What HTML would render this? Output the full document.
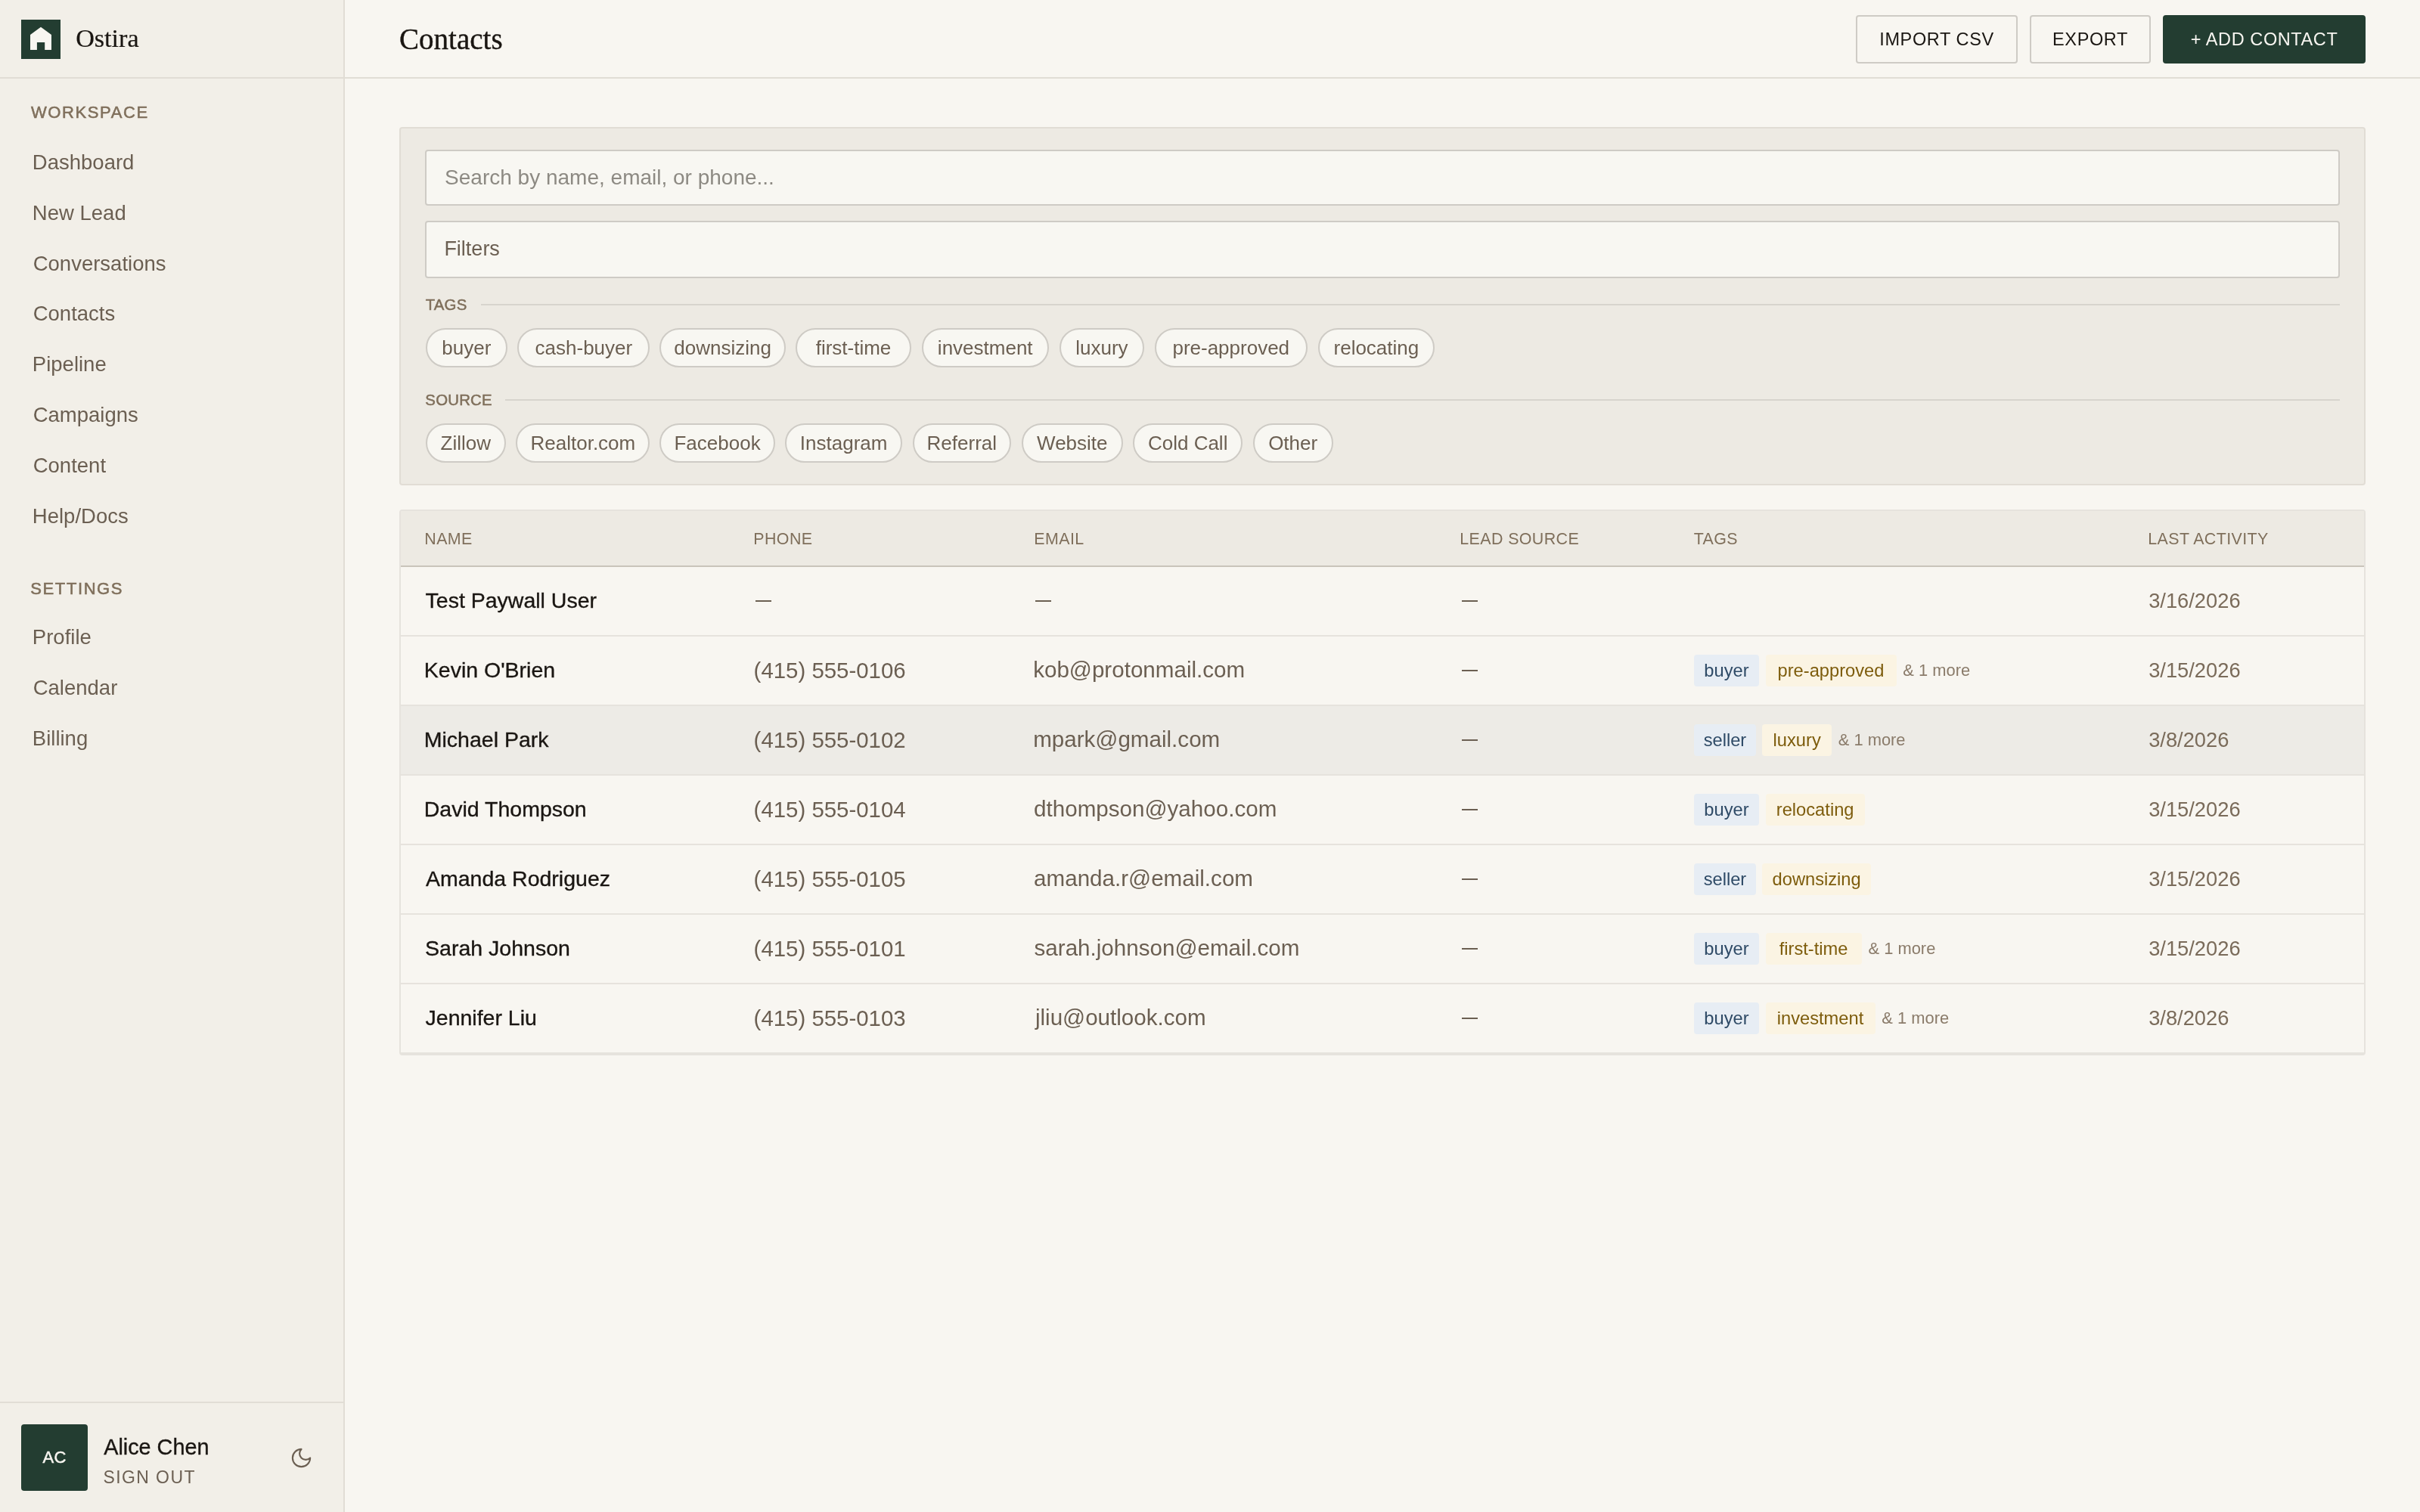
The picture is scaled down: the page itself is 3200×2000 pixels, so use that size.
<!DOCTYPE html>
<html><head><meta charset="utf-8"><title>Contacts</title>
<style>
html,body{margin:0;padding:0;background:#f8f6f1}
@media (max-width:2000px){#root{zoom:0.5}}
body{width:3200px;height:2000px;position:relative;overflow:hidden;background:#f8f6f1;font-family:'Liberation Sans', sans-serif}
.t{position:absolute;white-space:nowrap}
#root{position:absolute;left:0;top:0;width:3200px;height:2000px;will-change:transform}
.ct{position:absolute;text-align:center;white-space:nowrap;font-family:'Liberation Sans', sans-serif}
.chip{position:absolute;box-sizing:border-box;height:52px;line-height:48px;border:2px solid #cecbc5;border-radius:26px;background:#f8f7f2;
  text-align:center;font-size:26px;color:#6b5f52;white-space:nowrap}
.btn{position:absolute;top:20px;height:64px;box-sizing:border-box;border:2px solid #cecbc5;border-radius:4px;background:#f8f6f1;
  line-height:60px;text-align:center;font-size:23.5px;letter-spacing:0.6px;color:#1a1612;white-space:nowrap}
</style></head>
<body><div id="root">
<div style="position:absolute;left:0;top:0;width:454px;height:2000px;background:#f2efe8;border-right:2px solid #e1ddd5"></div>
<div style="position:absolute;left:28px;top:26px;width:52px;height:52px;background:#233d31"></div>
<svg style="position:absolute;left:0;top:0" width="100" height="100" viewBox="0 0 100 100"><path d="M40 46 L54 35.7 L68 46 V66 H59.2 V55.9 H48.9 V66 H40 Z" fill="#f8f6f1"/></svg>
<div style="position:absolute;left:28px;top:1884px;width:88px;height:88px;background:#233d31;border-radius:4px"></div>
<svg style="position:absolute;left:382.5px;top:1912.5px" width="31" height="31" viewBox="0 0 24 24" fill="none" stroke="#6b5f52" stroke-width="1.65" stroke-linecap="round" stroke-linejoin="round"><path d="M12 3a6 6 0 0 0 9 9 9 9 0 1 1-9-9Z"/></svg>
<div class="btn" style="left:2454px;width:214px;">IMPORT CSV</div>
<div class="btn" style="left:2684px;width:160px;">EXPORT</div>
<div class="btn" style="left:2860px;width:268px;background:#233d31;border-color:#233d31;color:#f8f6f1">+ ADD CONTACT</div>
<div style="position:absolute;left:528px;top:168px;width:2596px;height:470px;background:#edeae3;border:2px solid #e1ddd5;border-radius:4px"></div>
<div style="position:absolute;left:562px;top:198px;width:2528px;height:70px;background:#f8f7f2;border:2px solid #cecbc5;border-radius:4px"></div>
<div style="position:absolute;left:562px;top:292px;width:2528px;height:72px;background:#f8f7f2;border:2px solid #cecbc5;border-radius:4px"></div>
<div style="position:absolute;left:528px;top:674px;width:2596px;height:718px;background:#f8f6f1;border:2px solid #e6e3dd;border-radius:4px"></div>
<div style="position:absolute;left:998.5px;top:794px;width:21px;height:2px;background:#6b5f52"></div>
<div style="position:absolute;left:1369px;top:794px;width:21px;height:2px;background:#6b5f52"></div>
<div style="position:absolute;left:1933px;top:794px;width:21px;height:2px;background:#6b5f52"></div>
<div style="position:absolute;left:530px;top:840px;width:2596px;height:2px;background:#e6e3dd"></div>
<div style="position:absolute;left:1933px;top:886px;width:21px;height:2px;background:#6b5f52"></div>
<div style="position:absolute;left:530px;top:932px;width:2596px;height:2px;background:#e6e3dd"></div>
<div style="position:absolute;left:530px;top:934px;width:2596px;height:90px;background:#edebe6"></div>
<div style="position:absolute;left:1933px;top:978px;width:21px;height:2px;background:#6b5f52"></div>
<div style="position:absolute;left:530px;top:1024px;width:2596px;height:2px;background:#e6e3dd"></div>
<div style="position:absolute;left:1933px;top:1070px;width:21px;height:2px;background:#6b5f52"></div>
<div style="position:absolute;left:530px;top:1116px;width:2596px;height:2px;background:#e6e3dd"></div>
<div style="position:absolute;left:1933px;top:1162px;width:21px;height:2px;background:#6b5f52"></div>
<div style="position:absolute;left:530px;top:1208px;width:2596px;height:2px;background:#e6e3dd"></div>
<div style="position:absolute;left:1933px;top:1254px;width:21px;height:2px;background:#6b5f52"></div>
<div style="position:absolute;left:530px;top:1300px;width:2596px;height:2px;background:#e6e3dd"></div>
<div style="position:absolute;left:1933px;top:1346px;width:21px;height:2px;background:#6b5f52"></div>
<div style="position:absolute;left:530px;top:1392px;width:2596px;height:2px;background:#e6e3dd"></div>
<div style="position:absolute;left:0px;top:102px;width:454px;height:2px;background:#e1ddd5"></div>
<div style="position:absolute;left:0px;top:1854px;width:454px;height:2px;background:#e1ddd5"></div>
<div style="position:absolute;left:456px;top:102px;width:2744px;height:2px;background:#e1ddd5"></div>
<div style="position:absolute;left:636px;top:402px;width:2458px;height:2px;background:#d7d4cd"></div>
<div style="position:absolute;left:668px;top:528px;width:2426px;height:2px;background:#d7d4cd"></div>
<div style="position:absolute;left:530px;top:676px;width:2596px;height:72px;background:#edeae3"></div>
<div style="position:absolute;left:530px;top:748px;width:2596px;height:2px;background:#c9c4ba"></div>
<div class="chip" style="left:562.6px;top:434px;width:108.4px;">buyer</div>
<div class="chip" style="left:684.3px;top:434px;width:175.2px;">cash-buyer</div>
<div class="chip" style="left:872.3px;top:434px;width:166.6px;">downsizing</div>
<div class="chip" style="left:1052.0px;top:434px;width:153.0px;">first-time</div>
<div class="chip" style="left:1218.7px;top:434px;width:168.1px;">investment</div>
<div class="chip" style="left:1401.0px;top:434px;width:111.8px;">luxury</div>
<div class="chip" style="left:1526.5px;top:434px;width:202.5px;">pre-approved</div>
<div class="chip" style="left:1742.7px;top:434px;width:154.4px;">relocating</div>
<div class="chip" style="left:562.6px;top:560px;width:106.4px;">Zillow</div>
<div class="chip" style="left:682.3px;top:560px;width:177.2px;">Realtor.com</div>
<div class="chip" style="left:872.3px;top:560px;width:152.5px;">Facebook</div>
<div class="chip" style="left:1038.4px;top:560px;width:154.5px;">Instagram</div>
<div class="chip" style="left:1207.0px;top:560px;width:129.7px;">Referral</div>
<div class="chip" style="left:1350.8px;top:560px;width:134.0px;">Website</div>
<div class="chip" style="left:1498.4px;top:560px;width:144.6px;">Cold Call</div>
<div class="chip" style="left:1656.6px;top:560px;width:106.1px;">Other</div>
<div class="ct" style="left:2240.2px;top:866px;width:85.6px;height:42px;line-height:42px;font-size:23.7px;color:#2e4a66;font-weight:400;letter-spacing:0px;background:#e7edf4;border-radius:4px;">buyer</div>
<div class="ct" style="left:2334.5px;top:866px;width:173px;height:42px;line-height:42px;font-size:23.7px;color:#7d5c0c;font-weight:400;letter-spacing:0px;background:#fbf4e3;border-radius:4px;">pre-approved</div>
<div class="ct" style="left:2240.2px;top:958px;width:81.5px;height:42px;line-height:42px;font-size:23.7px;color:#2e4a66;font-weight:400;letter-spacing:0px;background:#e7edf4;border-radius:4px;">seller</div>
<div class="ct" style="left:2330.3999999999996px;top:958px;width:91.5px;height:42px;line-height:42px;font-size:23.7px;color:#7d5c0c;font-weight:400;letter-spacing:0px;background:#fbf4e3;border-radius:4px;">luxury</div>
<div class="ct" style="left:2240.2px;top:1050px;width:85.6px;height:42px;line-height:42px;font-size:23.7px;color:#2e4a66;font-weight:400;letter-spacing:0px;background:#e7edf4;border-radius:4px;">buyer</div>
<div class="ct" style="left:2334.5px;top:1050px;width:131.3px;height:42px;line-height:42px;font-size:23.7px;color:#7d5c0c;font-weight:400;letter-spacing:0px;background:#fbf4e3;border-radius:4px;">relocating</div>
<div class="ct" style="left:2240.2px;top:1142px;width:81.5px;height:42px;line-height:42px;font-size:23.7px;color:#2e4a66;font-weight:400;letter-spacing:0px;background:#e7edf4;border-radius:4px;">seller</div>
<div class="ct" style="left:2330.3999999999996px;top:1142px;width:143.5px;height:42px;line-height:42px;font-size:23.7px;color:#7d5c0c;font-weight:400;letter-spacing:0px;background:#fbf4e3;border-radius:4px;">downsizing</div>
<div class="ct" style="left:2240.2px;top:1234px;width:85.6px;height:42px;line-height:42px;font-size:23.7px;color:#2e4a66;font-weight:400;letter-spacing:0px;background:#e7edf4;border-radius:4px;">buyer</div>
<div class="ct" style="left:2334.5px;top:1234px;width:127.2px;height:42px;line-height:42px;font-size:23.7px;color:#7d5c0c;font-weight:400;letter-spacing:0px;background:#fbf4e3;border-radius:4px;">first-time</div>
<div class="ct" style="left:2240.2px;top:1326px;width:85.6px;height:42px;line-height:42px;font-size:23.7px;color:#2e4a66;font-weight:400;letter-spacing:0px;background:#e7edf4;border-radius:4px;">buyer</div>
<div class="ct" style="left:2334.5px;top:1326px;width:145px;height:42px;line-height:42px;font-size:23.7px;color:#7d5c0c;font-weight:400;letter-spacing:0px;background:#fbf4e3;border-radius:4px;">investment</div>
<div class="ct" style="left:28px;top:1884px;width:88px;height:88px;line-height:88px;font-size:22px;color:#f8f6f1;font-weight:400;letter-spacing:0.3px;-webkit-text-stroke:0.5px #f8f6f1;">AC</div>
<div class="t" style="left:100.13px;top:26.96px;font-family:'Liberation Serif', serif;font-size:34.2px;line-height:48px;color:#1a1612;font-weight:400;letter-spacing:0px;-webkit-text-stroke:0.2px #1a1612;">Ostira</div>
<div class="t" style="left:41.00px;top:133.08px;font-family:'Liberation Sans', sans-serif;font-size:22px;line-height:31px;color:#7f6f5b;font-weight:400;letter-spacing:1.6px;-webkit-text-stroke:0.55px #7f6f5b;">WORKSPACE</div>
<div class="t" style="left:42.85px;top:195.77px;font-family:'Liberation Sans', sans-serif;font-size:27.5px;line-height:38px;color:#6b5f52;font-weight:400;letter-spacing:0px;">Dashboard</div>
<div class="t" style="left:42.85px;top:262.67px;font-family:'Liberation Sans', sans-serif;font-size:27.5px;line-height:38px;color:#6b5f52;font-weight:400;letter-spacing:0px;">New Lead</div>
<div class="t" style="left:43.71px;top:329.57px;font-family:'Liberation Sans', sans-serif;font-size:27.5px;line-height:38px;color:#6b5f52;font-weight:400;letter-spacing:0px;">Conversations</div>
<div class="t" style="left:43.71px;top:396.47px;font-family:'Liberation Sans', sans-serif;font-size:27.5px;line-height:38px;color:#6b5f52;font-weight:400;letter-spacing:0px;">Contacts</div>
<div class="t" style="left:42.85px;top:463.37px;font-family:'Liberation Sans', sans-serif;font-size:27.5px;line-height:38px;color:#6b5f52;font-weight:400;letter-spacing:0px;">Pipeline</div>
<div class="t" style="left:43.71px;top:530.27px;font-family:'Liberation Sans', sans-serif;font-size:27.5px;line-height:38px;color:#6b5f52;font-weight:400;letter-spacing:0px;">Campaigns</div>
<div class="t" style="left:43.71px;top:597.17px;font-family:'Liberation Sans', sans-serif;font-size:27.5px;line-height:38px;color:#6b5f52;font-weight:400;letter-spacing:0px;">Content</div>
<div class="t" style="left:42.85px;top:664.07px;font-family:'Liberation Sans', sans-serif;font-size:27.5px;line-height:38px;color:#6b5f52;font-weight:400;letter-spacing:0px;">Help/Docs</div>
<div class="t" style="left:40.31px;top:762.88px;font-family:'Liberation Sans', sans-serif;font-size:22px;line-height:31px;color:#7f6f5b;font-weight:400;letter-spacing:1.6px;-webkit-text-stroke:0.55px #7f6f5b;">SETTINGS</div>
<div class="t" style="left:42.85px;top:824.07px;font-family:'Liberation Sans', sans-serif;font-size:27.5px;line-height:38px;color:#6b5f52;font-weight:400;letter-spacing:0px;">Profile</div>
<div class="t" style="left:43.71px;top:890.97px;font-family:'Liberation Sans', sans-serif;font-size:27.5px;line-height:38px;color:#6b5f52;font-weight:400;letter-spacing:0px;">Calendar</div>
<div class="t" style="left:42.85px;top:957.87px;font-family:'Liberation Sans', sans-serif;font-size:27.5px;line-height:38px;color:#6b5f52;font-weight:400;letter-spacing:0px;">Billing</div>
<div class="t" style="left:137.20px;top:1894.12px;font-family:'Liberation Sans', sans-serif;font-size:28.8px;line-height:40px;color:#1a1612;font-weight:400;letter-spacing:0px;-webkit-text-stroke:0.35px #1a1612;">Alice Chen</div>
<div class="t" style="left:136.48px;top:1937.73px;font-family:'Liberation Sans', sans-serif;font-size:23px;line-height:32px;color:#6b5f52;font-weight:400;letter-spacing:1.4px;">SIGN OUT</div>
<div class="t" style="left:528.08px;top:23.64px;font-family:'Liberation Serif', serif;font-size:39px;line-height:55px;color:#1a1612;font-weight:400;letter-spacing:0px;-webkit-text-stroke:0.4px #1a1612;">Contacts</div>
<div class="t" style="left:588.12px;top:214.60px;font-family:'Liberation Sans', sans-serif;font-size:28px;line-height:39px;color:#8d8a83;font-weight:400;letter-spacing:0px;">Search by name, email, or phone...</div>
<div class="t" style="left:587.39px;top:309.94px;font-family:'Liberation Sans', sans-serif;font-size:27px;line-height:38px;color:#6b5f52;font-weight:400;letter-spacing:0px;">Filters</div>
<div class="t" style="left:562.68px;top:388.73px;font-family:'Liberation Sans', sans-serif;font-size:20.4px;line-height:29px;color:#7f6f5b;font-weight:400;letter-spacing:0.2px;-webkit-text-stroke:0.5px #7f6f5b;">TAGS</div>
<div class="t" style="left:562.36px;top:514.53px;font-family:'Liberation Sans', sans-serif;font-size:20.4px;line-height:29px;color:#7f6f5b;font-weight:400;letter-spacing:0.2px;-webkit-text-stroke:0.5px #7f6f5b;">SOURCE</div>
<div class="t" style="left:561.33px;top:697.68px;font-family:'Liberation Sans', sans-serif;font-size:21.4px;line-height:30px;color:#7f6f5b;font-weight:400;letter-spacing:0.4px;">NAME</div>
<div class="t" style="left:996.33px;top:697.68px;font-family:'Liberation Sans', sans-serif;font-size:21.4px;line-height:30px;color:#7f6f5b;font-weight:400;letter-spacing:0.4px;">PHONE</div>
<div class="t" style="left:1367.33px;top:697.68px;font-family:'Liberation Sans', sans-serif;font-size:21.4px;line-height:30px;color:#7f6f5b;font-weight:400;letter-spacing:0.4px;">EMAIL</div>
<div class="t" style="left:1930.33px;top:697.68px;font-family:'Liberation Sans', sans-serif;font-size:21.4px;line-height:30px;color:#7f6f5b;font-weight:400;letter-spacing:0.4px;">LEAD SOURCE</div>
<div class="t" style="left:2239.67px;top:697.68px;font-family:'Liberation Sans', sans-serif;font-size:21.4px;line-height:30px;color:#7f6f5b;font-weight:400;letter-spacing:0.4px;">TAGS</div>
<div class="t" style="left:2840.33px;top:697.68px;font-family:'Liberation Sans', sans-serif;font-size:21.4px;line-height:30px;color:#7f6f5b;font-weight:400;letter-spacing:0.4px;">LAST ACTIVITY</div>
<div class="t" style="left:562.55px;top:774.32px;font-family:'Liberation Sans', sans-serif;font-size:28.5px;line-height:40px;color:#1a1612;font-weight:400;letter-spacing:0px;-webkit-text-stroke:0.35px #1a1612;">Test Paywall User</div>
<div class="t" style="left:2841.15px;top:775.74px;font-family:'Liberation Sans', sans-serif;font-size:27.3px;line-height:38px;color:#7a6b5a;font-weight:400;letter-spacing:0px;">3/16/2026</div>
<div class="t" style="left:560.77px;top:866.32px;font-family:'Liberation Sans', sans-serif;font-size:28.5px;line-height:40px;color:#1a1612;font-weight:400;letter-spacing:0px;-webkit-text-stroke:0.35px #1a1612;">Kevin O'Brien</div>
<div class="t" style="left:996.62px;top:865.51px;font-family:'Liberation Sans', sans-serif;font-size:29.4px;line-height:41px;color:#6b5f52;font-weight:400;letter-spacing:0px;">(415) 555-0106</div>
<div class="t" style="left:1366.15px;top:865.44px;font-family:'Liberation Sans', sans-serif;font-size:29.6px;line-height:41px;color:#6b5f52;font-weight:400;letter-spacing:0px;">kob@protonmail.com</div>
<div class="t" style="left:2516.32px;top:871.11px;font-family:'Liberation Sans', sans-serif;font-size:21.9px;line-height:31px;color:#8a7b6a;font-weight:400;letter-spacing:0px;">&amp; 1 more</div>
<div class="t" style="left:2841.15px;top:867.74px;font-family:'Liberation Sans', sans-serif;font-size:27.3px;line-height:38px;color:#7a6b5a;font-weight:400;letter-spacing:0px;">3/15/2026</div>
<div class="t" style="left:560.77px;top:958.32px;font-family:'Liberation Sans', sans-serif;font-size:28.5px;line-height:40px;color:#1a1612;font-weight:400;letter-spacing:0px;-webkit-text-stroke:0.35px #1a1612;">Michael Park</div>
<div class="t" style="left:996.62px;top:957.51px;font-family:'Liberation Sans', sans-serif;font-size:29.4px;line-height:41px;color:#6b5f52;font-weight:400;letter-spacing:0px;">(415) 555-0102</div>
<div class="t" style="left:1366.15px;top:957.44px;font-family:'Liberation Sans', sans-serif;font-size:29.6px;line-height:41px;color:#6b5f52;font-weight:400;letter-spacing:0px;">mpark@gmail.com</div>
<div class="t" style="left:2430.72px;top:963.11px;font-family:'Liberation Sans', sans-serif;font-size:21.9px;line-height:31px;color:#8a7b6a;font-weight:400;letter-spacing:0px;">&amp; 1 more</div>
<div class="t" style="left:2841.15px;top:959.74px;font-family:'Liberation Sans', sans-serif;font-size:27.3px;line-height:38px;color:#7a6b5a;font-weight:400;letter-spacing:0px;">3/8/2026</div>
<div class="t" style="left:560.77px;top:1050.32px;font-family:'Liberation Sans', sans-serif;font-size:28.5px;line-height:40px;color:#1a1612;font-weight:400;letter-spacing:0px;-webkit-text-stroke:0.35px #1a1612;">David Thompson</div>
<div class="t" style="left:996.62px;top:1049.51px;font-family:'Liberation Sans', sans-serif;font-size:29.4px;line-height:41px;color:#6b5f52;font-weight:400;letter-spacing:0px;">(415) 555-0104</div>
<div class="t" style="left:1367.08px;top:1049.44px;font-family:'Liberation Sans', sans-serif;font-size:29.6px;line-height:41px;color:#6b5f52;font-weight:400;letter-spacing:0px;">dthompson@yahoo.com</div>
<div class="t" style="left:2841.15px;top:1051.74px;font-family:'Liberation Sans', sans-serif;font-size:27.3px;line-height:38px;color:#7a6b5a;font-weight:400;letter-spacing:0px;">3/15/2026</div>
<div class="t" style="left:563.00px;top:1142.32px;font-family:'Liberation Sans', sans-serif;font-size:28.5px;line-height:40px;color:#1a1612;font-weight:400;letter-spacing:0px;-webkit-text-stroke:0.35px #1a1612;">Amanda Rodriguez</div>
<div class="t" style="left:996.62px;top:1141.51px;font-family:'Liberation Sans', sans-serif;font-size:29.4px;line-height:41px;color:#6b5f52;font-weight:400;letter-spacing:0px;">(415) 555-0105</div>
<div class="t" style="left:1367.08px;top:1141.44px;font-family:'Liberation Sans', sans-serif;font-size:29.6px;line-height:41px;color:#6b5f52;font-weight:400;letter-spacing:0px;">amanda.r@email.com</div>
<div class="t" style="left:2841.15px;top:1143.74px;font-family:'Liberation Sans', sans-serif;font-size:27.3px;line-height:38px;color:#7a6b5a;font-weight:400;letter-spacing:0px;">3/15/2026</div>
<div class="t" style="left:562.11px;top:1234.32px;font-family:'Liberation Sans', sans-serif;font-size:28.5px;line-height:40px;color:#1a1612;font-weight:400;letter-spacing:0px;-webkit-text-stroke:0.35px #1a1612;">Sarah Johnson</div>
<div class="t" style="left:996.62px;top:1233.51px;font-family:'Liberation Sans', sans-serif;font-size:29.4px;line-height:41px;color:#6b5f52;font-weight:400;letter-spacing:0px;">(415) 555-0101</div>
<div class="t" style="left:1367.54px;top:1233.44px;font-family:'Liberation Sans', sans-serif;font-size:29.6px;line-height:41px;color:#6b5f52;font-weight:400;letter-spacing:0px;">sarah.johnson@email.com</div>
<div class="t" style="left:2470.52px;top:1239.11px;font-family:'Liberation Sans', sans-serif;font-size:21.9px;line-height:31px;color:#8a7b6a;font-weight:400;letter-spacing:0px;">&amp; 1 more</div>
<div class="t" style="left:2841.15px;top:1235.74px;font-family:'Liberation Sans', sans-serif;font-size:27.3px;line-height:38px;color:#7a6b5a;font-weight:400;letter-spacing:0px;">3/15/2026</div>
<div class="t" style="left:562.55px;top:1326.32px;font-family:'Liberation Sans', sans-serif;font-size:28.5px;line-height:40px;color:#1a1612;font-weight:400;letter-spacing:0px;-webkit-text-stroke:0.35px #1a1612;">Jennifer Liu</div>
<div class="t" style="left:996.62px;top:1325.51px;font-family:'Liberation Sans', sans-serif;font-size:29.4px;line-height:41px;color:#6b5f52;font-weight:400;letter-spacing:0px;">(415) 555-0103</div>
<div class="t" style="left:1368.92px;top:1325.44px;font-family:'Liberation Sans', sans-serif;font-size:29.6px;line-height:41px;color:#6b5f52;font-weight:400;letter-spacing:0px;">jliu@outlook.com</div>
<div class="t" style="left:2488.32px;top:1331.11px;font-family:'Liberation Sans', sans-serif;font-size:21.9px;line-height:31px;color:#8a7b6a;font-weight:400;letter-spacing:0px;">&amp; 1 more</div>
<div class="t" style="left:2841.15px;top:1327.74px;font-family:'Liberation Sans', sans-serif;font-size:27.3px;line-height:38px;color:#7a6b5a;font-weight:400;letter-spacing:0px;">3/8/2026</div>
</div></body></html>
